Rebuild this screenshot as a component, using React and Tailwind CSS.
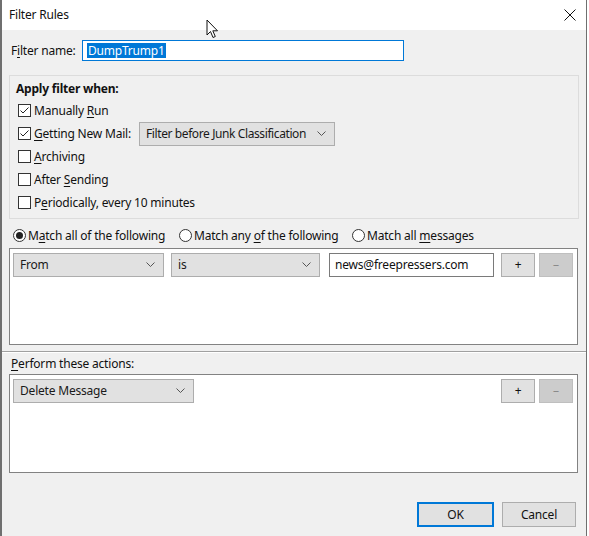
import React from 'react'

const font = { fontFamily: '"Segoe UI", "Noto Sans", "Liberation Sans", sans-serif' }

function U({ children }) {
  return <span className="underline underline-offset-2">{children}</span>
}

function Check({ checked }) {
  return (
    <span className="w-[13px] h-[13px] border border-[#333] bg-white flex items-center justify-center shrink-0">
      {checked && (
        <svg width="11" height="11" viewBox="0 0 11 11">
          <path d="M1.5 5.5 L4 8 L9.5 2.5" fill="none" stroke="#222" strokeWidth="1" />
        </svg>
      )}
    </span>
  )
}

function Radio({ on }) {
  return (
    <span className="w-[13px] h-[13px] rounded-full border border-[#333] bg-white flex items-center justify-center shrink-0">
      {on && <span className="w-[7px] h-[7px] rounded-full bg-[#222]" />}
    </span>
  )
}

function Chevron() {
  return (
    <svg width="9" height="6" viewBox="0 0 9 6" className="shrink-0">
      <path d="M0.5 0.5 L4.5 4.5 L8.5 0.5" fill="none" stroke="#555" strokeWidth="1" />
    </svg>
  )
}

function Select({ label, w, tight }) {
  return (
    <div className={`${w} h-[24px] bg-[#e1e1e1] border border-[#adadad] flex items-center justify-between pl-[6px] pr-[8px] text-[#1a1a1a] whitespace-nowrap`}>
      <span className={tight ? 'tracking-[-0.4px]' : ''}>{label}</span>
      <Chevron />
    </div>
  )
}

function PlusMinus() {
  return (
    <div className="flex gap-[4px]">
      <div className="w-[34px] h-[24px] bg-[#e1e1e1] border border-[#adadad] flex items-center justify-center text-[#111]">+</div>
      <div className="w-[34px] h-[24px] bg-[#cccccc] border border-[#bfbfbf] flex items-center justify-center text-[#8a8a8a]">–</div>
    </div>
  )
}

function Row({ checked, children }) {
  return (
    <div className="h-[23px] flex items-center gap-[3px]">
      <Check checked={checked} />
      {children}
    </div>
  )
}

export default function App() {
  return (
    <div className="w-[589px] h-[536px] bg-white flex text-[12px] tracking-[-0.2px] text-[#111]" style={font}>
      <div className="w-[587px] h-full border-l-2 border-r border-[#6f6f6f] bg-[#f0f0f0] flex flex-col relative">
        <div className="h-[30px] bg-white flex items-center justify-between pl-[7px] pr-[10px]">
          <span>Filter Rules</span>
          <svg width="12" height="12" viewBox="0 0 12 12">
            <path d="M0.5 0.5 L11.5 11.5 M11.5 0.5 L0.5 11.5" stroke="#111" strokeWidth="1" />
          </svg>
        </div>

        <div className="flex items-center pl-[9px] pt-[10px] h-[31px]">
          <span className="w-[71px]">F<U>i</U>lter name:</span>
          <div className="w-[322px] h-[21px] bg-white border border-[#0078d7] flex items-center pl-[4px]">
            <span className="bg-[#0078d7] text-white px-[1px] leading-[15px]">DumpTrump1</span>
          </div>
        </div>

        <div className="ml-[7px] mr-[7px] mt-[14px] h-[144px] border border-[#dcdcdc] pl-[8px] pt-[3px]">
          <div className="font-bold h-[20px] flex items-center -ml-[2px]">Apply filter when:</div>
          <Row checked><span>Manually <U>R</U>un</span></Row>
          <Row checked>
            <span className="w-[102px]"><U>G</U>etting New Mail:</span>
            <Select label="Filter before Junk Classification" w="w-[196px]" tight />
          </Row>
          <Row><span><U>A</U>rchiving</span></Row>
          <Row><span>After <U>S</U>ending</span></Row>
          <Row><span>P<U>e</U>riodically, every 10 minutes</span></Row>
        </div>

        <div className="h-[29px] flex items-center pl-[11px] pt-[4px]">
          <div className="flex items-center gap-[2px] w-[166px]"><Radio on /><span>M<U>a</U>tch all of the following</span></div>
          <div className="flex items-center gap-[2px] w-[173px]"><Radio /><span>Match any <U>o</U>f the following</span></div>
          <div className="flex items-center gap-[2px]"><Radio /><span>Match all <U>m</U>essages</span></div>
        </div>

        <div className="ml-[7px] mr-[8px] h-[97px] bg-white border border-[#828282] pt-[4px] pl-[3px] pr-[4px]">
          <div className="flex items-center">
            <Select label="From" w="w-[151px]" />
            <div className="w-[7px]" />
            <Select label="is" w="w-[149px]" />
            <div className="w-[9px]" />
            <div className="w-[165px] h-[24px] border border-[#7a7a7a] bg-white flex items-center pl-[5px]">news@freepressers.com</div>
            <div className="flex-1" />
            <PlusMinus />
          </div>
        </div>

        <div className="mt-[6px] border-t border-[#a0a0a0] border-b border-b-white h-0" />

        <div className="h-[21px] flex items-center pl-[9px]"><span><U>P</U>erform these actions:</span></div>

        <div className="ml-[7px] mr-[8px] h-[99px] bg-white border border-[#828282] pt-[4px] pl-[3px] pr-[4px]">
          <div className="flex items-center justify-between">
            <Select label="Delete Message" w="w-[181px]" />
            <PlusMinus />
          </div>
        </div>

        <div className="flex justify-end gap-[8px] pr-[10px] mt-[29px]">
          <div className="w-[77px] h-[25px] bg-[#e1e1e1] border-2 border-[#0078d7] flex items-center justify-center">OK</div>
          <div className="w-[74px] h-[25px] bg-[#e1e1e1] border border-[#adadad] flex items-center justify-center">Cancel</div>
        </div>

        <svg className="absolute left-[204px] top-[19px]" width="14" height="20" viewBox="0 0 14 20">
          <path d="M1 1 L1 16 L4.5 12.5 L7 18.5 L9.3 17.5 L6.8 11.8 L11.5 11.8 Z" fill="white" stroke="#111" strokeWidth="1" strokeLinejoin="round" />
        </svg>
      </div>
    </div>
  )
}
